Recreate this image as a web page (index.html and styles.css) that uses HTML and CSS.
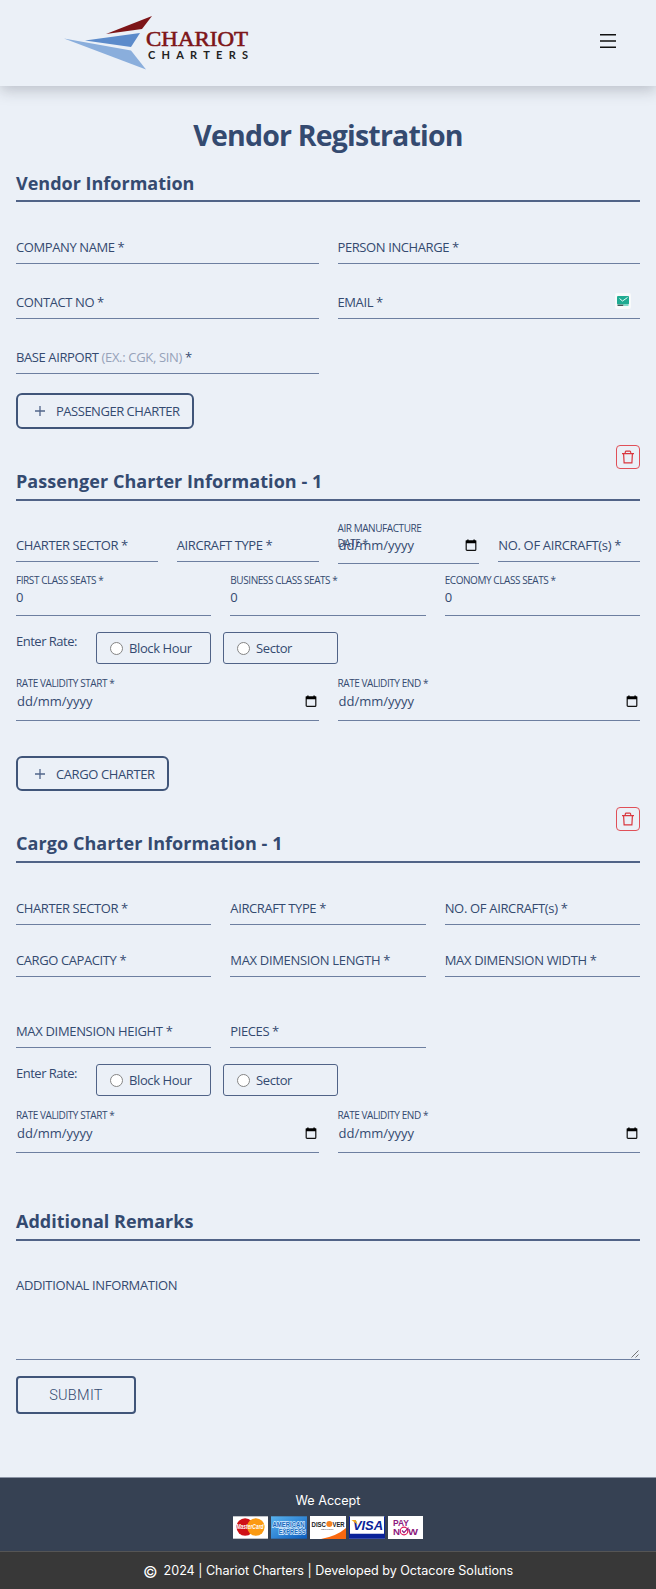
FILE: index.html
```html
<!DOCTYPE html>
<html lang="en">
<head>
<meta charset="utf-8">
<title>Vendor Registration</title>
<link rel="stylesheet" href="styles.css">
</head>
<body>
<svg class="defs" width="0" height="0">
  <symbol id="plus" viewBox="0 0 12 12"><path d="M6 1v10M1 6h10" stroke="#52658a" stroke-width="1.3" fill="none"/></symbol>
  <symbol id="trash" viewBox="0 0 14 14"><path d="M1 3.6h12M4.2 3.400Q4.200 1.200 5 1.200h4q.8 0 .8 2.200M2.600 3.600l.5 9.200h7.800l.5-9.200" stroke="#d9363e" stroke-width="1.2" fill="none"/></symbol>
  <symbol id="cal" viewBox="0 0 12 12"><path d="M1.2 2.2h9.6v8.200q0 .9-.9.9H2.100q-.9 0-.9-.9z" stroke="#111" stroke-width="1.2" fill="none"/><path d="M1 1.6h10v2.600H1zM2.200.5h1.400v2H2.200zM8.400.5h1.400v2H8.400z" fill="#000"/></symbol>
</svg>
<header class="header">
  <svg class="logo" width="186" height="56" viewBox="0 0 186 56">
    <path d="M88 1L42 19l36-5z" fill="#7d1518"/>
    <path d="M76 18L21 25.500l46 6.500z" fill="#5c8bcb"/>
    <path d="M0 23.500l67 12 15 19z" fill="#8aaedc"/>
    <text x="82" y="30.500" textLength="102" lengthAdjust="spacingAndGlyphs" class="logo-name">CHARIOT</text>
    <text x="84" y="43.500" textLength="100" class="logo-sub">CHARTERS</text>
  </svg>
  <svg class="menu" width="18" height="16" viewBox="0 0 18 16"><path d="M1 1.800h16M1 8h16M1 14.200h16" stroke="#111" stroke-width="1.500"/></svg>
</header>
<main class="main">
  <h1 class="title">Vendor Registration</h1>
  <h2 class="heading h-vendor">Vendor Information</h2>
  <div class="grid two vendor">
    <div class="field"><label>COMPANY NAME *</label></div>
    <div class="field"><label>PERSON INCHARGE *</label></div>
    <div class="field"><label>CONTACT NO *</label></div>
    <div class="field"><label>EMAIL *</label>
      <svg class="mail" width="16" height="16" viewBox="0 0 16 16"><rect width="16" height="16" rx="2" fill="#f8fafb"/><rect x="2" y="3" width="12" height="8.500" rx="1" fill="#1fab92"/><path d="M4.500 5.500l3 2.500 5-3.500" stroke="#e8fff8" fill="none"/><path d="M2.500 12.300h6" stroke="#344" stroke-width="1.200"/><path d="M8.500 12.300h5" stroke="#6fd9c4" stroke-width="1.200"/></svg></div>
    <div class="field"><label>BASE AIRPORT <span class="hint">(EX.: CGK, SIN)</span> *</label></div>
  </div>
  <button class="add passenger"><svg width="12" height="12"><use href="#plus"/></svg>PASSENGER CHARTER</button>
  <div class="remove-row"><button class="remove"><svg width="14" height="14"><use href="#trash"/></svg></button></div>
  <h2 class="heading h-charter">Passenger Charter Information - 1</h2>
  <div class="grid four aircraft">
    <div class="field"><label>CHARTER SECTOR *</label></div>
    <div class="field"><label>AIRCRAFT TYPE *</label></div>
    <div class="field date over"><span class="small">AIR MANUFACTURE<br>DATE *</span><div class="value">dd/mm/yyyy<svg width="12" height="12"><use href="#cal"/></svg></div></div>
    <div class="field"><label class="wide">NO. OF AIRCRAFT(s) *</label></div>
  </div>
  <div class="grid three seats">
    <div class="field num"><span class="small">FIRST CLASS SEATS *</span><div class="value">0</div></div>
    <div class="field num"><span class="small">BUSINESS CLASS SEATS *</span><div class="value">0</div></div>
    <div class="field num"><span class="small">ECONOMY CLASS SEATS *</span><div class="value">0</div></div>
  </div>
  <div class="rate"><span class="rate-label">Enter Rate:</span>
    <div class="option"><i class="radio"></i>Block Hour</div><div class="option"><i class="radio"></i>Sector</div></div>
  <div class="grid two dates">
    <div class="field date"><span class="small">RATE VALIDITY START *</span><div class="value">dd/mm/yyyy<svg width="12" height="12"><use href="#cal"/></svg></div></div>
    <div class="field date"><span class="small">RATE VALIDITY END *</span><div class="value">dd/mm/yyyy<svg width="12" height="12"><use href="#cal"/></svg></div></div>
  </div>
  <button class="add cargo"><svg width="12" height="12"><use href="#plus"/></svg>CARGO CHARTER</button>
  <div class="remove-row"><button class="remove"><svg width="14" height="14"><use href="#trash"/></svg></button></div>
  <h2 class="heading h-charter">Cargo Charter Information - 1</h2>
  <div class="grid three cargo-fields">
    <div class="field"><label>CHARTER SECTOR *</label></div>
    <div class="field"><label>AIRCRAFT TYPE *</label></div>
    <div class="field"><label class="wide">NO. OF AIRCRAFT(s) *</label></div>
    <div class="field"><label>CARGO CAPACITY *</label></div>
    <div class="field"><label class="wide">MAX DIMENSION LENGTH *</label></div>
    <div class="field"><label class="wide">MAX DIMENSION WIDTH *</label></div>
    <div class="field"><label class="wide">MAX DIMENSION HEIGHT *</label></div>
    <div class="field"><label>PIECES *</label></div>
  </div>
  <div class="rate cargo-rate"><span class="rate-label">Enter Rate:</span>
    <div class="option"><i class="radio"></i>Block Hour</div><div class="option"><i class="radio"></i>Sector</div></div>
  <div class="grid two dates">
    <div class="field date"><span class="small">RATE VALIDITY START *</span><div class="value">dd/mm/yyyy<svg width="12" height="12"><use href="#cal"/></svg></div></div>
    <div class="field date"><span class="small">RATE VALIDITY END *</span><div class="value">dd/mm/yyyy<svg width="12" height="12"><use href="#cal"/></svg></div></div>
  </div>
  <h2 class="heading h-remarks">Additional Remarks</h2>
  <div class="remarks"><label>ADDITIONAL INFORMATION</label>
    <svg class="grip" width="8" height="8" viewBox="0 0 8 8"><path d="M0.500 7.500l7-7M4.500 7.500l3-3" stroke="#666" stroke-width=".9"/></svg></div>
  <button class="submit">SUBMIT</button>
</main>
<footer>
  <div class="accept">
    <div class="accept-text">We Accept</div>
    <div class="cards">
      <svg width="35" height="23" viewBox="0 0 36 23"><rect width="36" height="23" fill="#fff"/><circle cx="12.500" cy="11" r="9" fill="#cf1016"/><circle cx="23.500" cy="11" r="9" fill="#fb9a12"/><text x="3.500" y="13.500" textLength="28" lengthAdjust="spacingAndGlyphs" font-size="7" font-weight="700" font-style="italic" fill="#fff">MasterCard</text></svg>
      <svg width="36" height="23" viewBox="0 0 37 23"><defs><linearGradient id="ax" x2="1" y2="1"><stop stop-color="#59b3ef"/><stop offset="1" stop-color="#0c5cbd"/></linearGradient></defs><rect width="37" height="23" fill="url(#ax)"/><g fill="#1768bd" stroke="#d5ecff" stroke-width="1.300" paint-order="stroke" font-size="6.500" font-weight="700"><text x="1.500" y="10.500" textLength="33" lengthAdjust="spacingAndGlyphs">AMERICAN</text><text x="8" y="18.500" textLength="27.500" lengthAdjust="spacingAndGlyphs">EXPRESS</text></g></svg>
      <svg width="36" height="23" viewBox="0 0 36 23"><rect width="36" height="23" fill="#fff"/><path d="M36 12v11H11Q27 20 36 12z" fill="#f9680f"/><circle cx="19.300" cy="8" r="3" fill="#f58220"/><g font-size="7.200" font-weight="700" fill="#222"><text x="1.500" y="10.600" textLength="14.500" lengthAdjust="spacingAndGlyphs">DISC</text><text x="22.500" y="10.600" textLength="12" lengthAdjust="spacingAndGlyphs">VER</text></g><text x="11" y="14" font-size="2.500" fill="#444">NETWORK</text></svg>
      <svg width="36" height="23" viewBox="0 0 37 23"><rect width="37" height="23" fill="#fff"/><path d="M0 18h37v5H0zM0 0h1v23H0zM36 0h1v23h-1z" fill="#0a2299"/><text x="4" y="14" textLength="31" lengthAdjust="spacingAndGlyphs" font-size="14" font-weight="700" font-style="italic" fill="#0a2299">VISA</text><path d="M2.500 3.800h4.500l1.800 4.500z" fill="#f0a820"/></svg>
      <svg width="35" height="23" viewBox="0 0 35 23"><rect width="35" height="23" fill="#fff"/><g font-size="9" font-weight="700" fill="#8c1a80"><text x="5" y="10" textLength="16" lengthAdjust="spacingAndGlyphs">PAY</text><text x="5" y="19" textLength="7" lengthAdjust="spacingAndGlyphs">N</text><text x="20" y="19" textLength="10" lengthAdjust="spacingAndGlyphs">W</text></g><circle cx="16" cy="15" r="3.800" fill="#fff" stroke="#e0195a" stroke-width="1.200"/><path d="M14 14.500l2 2.200 4.500-5" stroke="#8c1a80" stroke-width="1.200" fill="none"/></svg>
    </div>
  </div>
  <div class="copy"><span class="c">©</span><span>2024 | Chariot Charters | Developed by Octacore Solutions</span></div>
</footer>
</body>
</html>
```
FILE: styles.css
```css
* { box-sizing: border-box; }
body { margin: 0; background: #ebf0f7; color: #344a70; font: 13px/18px "Open Sans", "Noto Sans", sans-serif; }
.defs { position: absolute; }
.header { height: 86px; padding: 15px 39px 0 64px; display: flex; justify-content: space-between; box-shadow: 0 4px 14px rgba(40, 45, 60, .25); }
.logo { display: block; }
.logo-name { font: 400 22px "Liberation Serif", serif; fill: #7d1518; stroke: #7d1518; stroke-width: .6px; }
.logo-sub { font: 700 11px Lato, sans-serif; fill: #222; }
.menu { margin-top: 18px; }
.main { padding: 0 16px; height: 1391px; }
h1, h2 { margin: 0; font-weight: 700; }
.title { padding-top: 28px; height: 79px; font-size: 28.5px; line-height: 42px; text-align: center; letter-spacing: -.8px; }
.heading { border-bottom: 2px solid #506387; font-size: 18px; line-height: 26px; height: 34px; padding-top: 1px; letter-spacing: .07px; }
.h-vendor { margin-top: 3px; padding-top: 2px; letter-spacing: 0; }
.grid { display: grid; column-gap: 19px; }
.two { grid-template-columns: 1fr 1fr; }
.three { grid-template-columns: repeat(3, 1fr); }
.four { grid-template-columns: repeat(4, 1fr); }
.field { position: relative; border-bottom: 1px solid #6d7fa0; display: flex; flex-direction: column; justify-content: flex-end; padding-bottom: 7px; white-space: nowrap; letter-spacing: -.4px; }
.wide { letter-spacing: -.33px; }
.vendor { grid-template-rows: 62px 55px 55px; }
.hint { color: #96a2b9; letter-spacing: -.33px; }
.mail { position: absolute; right: 9px; top: 29px; }
button { font-family: inherit; color: inherit; background: transparent; padding: 0; }
.add { display: flex; align-items: center; gap: 10px; border: 2px solid #405579; border-radius: 6px; height: 36px; padding: 0 0 0 16px; font-size: 13px; letter-spacing: -.48px; }
.passenger { width: 178px; margin-top: 19px; }
.cargo { width: 153px; height: 35px; margin-top: 35px; letter-spacing: -.4px; }
.remove-row { display: flex; justify-content: flex-end; margin-top: 16px; }
.remove { width: 24px; height: 24px; border: 1px solid #e05058; border-radius: 4px; display: flex; align-items: center; justify-content: center; }
.h-charter { margin-top: -2px; }
.aircraft { height: 62px; }
.aircraft .field { height: 61px; }
.aircraft .over { height: 63px; padding-bottom: 9px; }
.small { font-size: 10px; line-height: 15px; letter-spacing: -.43px; }
.over .small { position: absolute; left: 0; top: 20px; }
.value { display: flex; justify-content: space-between; align-items: center; }
.date .value { padding: 0 2px 0 1px; letter-spacing: 0; }
.seats .field { height: 53px; padding-bottom: 9px; }
.rate { display: flex; height: 49px; padding-top: 16px; }
.rate-label { width: 80px; letter-spacing: -.5px; }
.option { width: 115px; height: 32px; border: 1px solid #506387; border-radius: 3px; margin-right: 12px; display: flex; align-items: center; padding-left: 13px; gap: 6px; letter-spacing: -.4px; }
.radio { width: 13px; height: 13px; border-radius: 50%; border: 1px solid #858585; background: #fff; }
.dates .field { height: 56px; padding-bottom: 10px; }
.dates .small { margin-bottom: 1px; }
.cargo-fields { grid-template-rows: 62px 52px 71px; }
.h-remarks { margin-top: 54px; letter-spacing: 0; }
.remarks { position: relative; height: 119px; border-bottom: 1px solid #6d7fa0; padding-top: 35px; letter-spacing: -.34px; }
.grip { position: absolute; right: 1px; bottom: 1px; }
.submit { display: block; width: 120px; height: 38px; margin-top: 16px; border: 2px solid #405579; border-radius: 4px; font: 300 14.5px Roboto, sans-serif; letter-spacing: .3px; }
.accept { height: 74px; background: #364153; border-top: 1px solid #8c95a5; color: #fff; text-align: center; padding-top: 14px; font: 12.6px/18px Inter, sans-serif; }
.cards { display: flex; justify-content: center; gap: 3px; margin-top: 6px; font-family: "Liberation Sans", sans-serif; }
.copy { height: 38px; background: #383838; border-top: 1px solid #555; color: #fff; display: flex; justify-content: center; align-items: center; gap: 6px; font: 12.6px/18px Inter, sans-serif; letter-spacing: -.02px; }
.c { font-size: 16px; padding-top: 2px; }
```
